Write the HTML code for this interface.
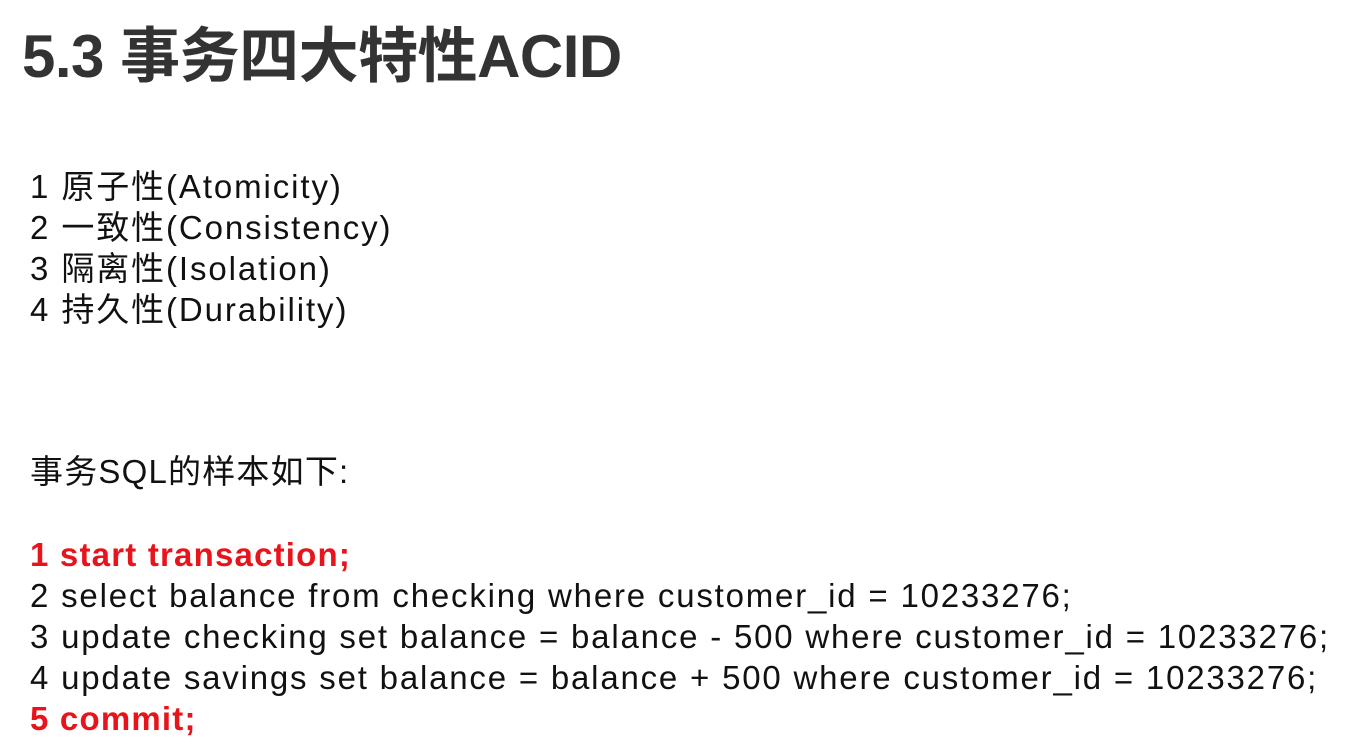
<!DOCTYPE html>
<html><head><meta charset="utf-8"><style>
body{margin:0;width:1364px;height:745px;background:#fff;overflow:hidden;font-family:"Liberation Sans","Noto Sans CJK SC",sans-serif;color:#111}
.t{position:absolute;left:22px;top:8px;font-size:60px;font-weight:bold;color:#333;white-space:nowrap;letter-spacing:-0.5px}
.l{position:absolute;left:30px;font-size:33px;line-height:41px;white-space:nowrap;letter-spacing:1.8px}
.c{letter-spacing:1.9px}
.r{color:#e8141b;font-weight:bold;letter-spacing:1.2px}
</style></head><body>
<div class="t">5.3 事务四大特性ACID</div>
<div class="l c" style="top:166px">1 原子性(Atomicity)<br>2 一致性(Consistency)<br>3 隔离性(Isolation)<br>4 持久性(Durability)</div>
<div class="l" style="top:451px;letter-spacing:1.2px">事务SQL的样本如下:</div>
<div class="l" style="top:534px"><span class="r">1 start transaction;</span><br>2 select balance from checking where customer_id = 10233276;<br>3 update checking set balance = balance - 500 where customer_id = 10233276;<br>4 update savings set balance = balance + 500 where customer_id = 10233276;<br><span class="r">5 commit;</span></div>
</body></html>
